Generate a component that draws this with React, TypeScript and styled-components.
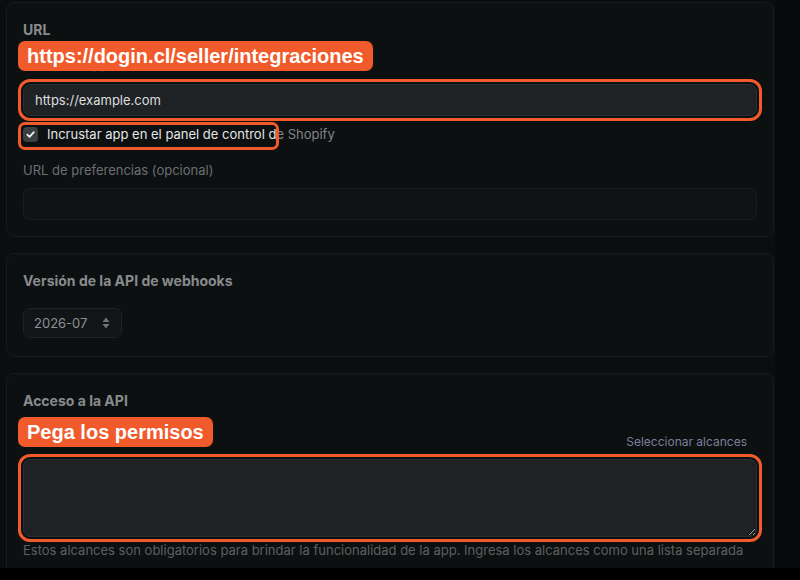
import React from "react";
import styled, { createGlobalStyle } from "styled-components";

const Global = createGlobalStyle`
  html, body { margin: 0; padding: 0; background: #000; }
  body { font-family: Inter, "Noto Sans", sans-serif; -webkit-font-smoothing: antialiased; }
  * { box-sizing: border-box; }
`;

const ORANGE = "#f15a2b";

const Viewport = styled.div`
  height: 568px;
  width: 800px;
  overflow: hidden;
  background: #090a0b;
`;

const Column = styled.div`
  width: 775px;
  height: 100%;
  background: #0b0d0e;
  padding: 2px 1px 0 6px;
  display: flex;
  flex-direction: column;
  gap: 16px;
`;

const Card = styled.section<{ $pb?: number }>`
  position: relative;
  flex-shrink: 0;
  background: #0d1011;
  border: 1px solid #171b1d;
  border-radius: 8px;
  padding: 17px 16px ${(p) => p.$pb ?? 16}px 16px;
  display: flex;
  flex-direction: column;
`;

const Title = styled.h2<{ $mb: number }>`
  margin: 0 0 ${(p) => p.$mb}px 0;
  font-size: 14px;
  line-height: 20px;
  font-weight: 700;
  color: #888b8d;
`;

const Label = styled.div<{ $mb: number }>`
  font-size: 13px;
  line-height: 20px;
  color: #6b6f71;
  margin-bottom: ${(p) => p.$mb}px;
`;

const Input = styled.div<{ $filled?: boolean; $ring?: boolean }>`
  height: 32px;
  border-radius: 7px;
  display: flex;
  align-items: center;
  padding: 0 11px;
  font-size: 13px;
  color: #dcdedf;
  background: ${(p) => (p.$filled ? "#1f2225" : "#101315")};
  border: 1px solid ${(p) => (p.$filled ? "#2b2f32" : "#1a1e20")};
  outline: ${(p) => (p.$ring ? `3px solid ${ORANGE}` : "none")};
  outline-offset: 2px;
`;

const CheckRow = styled.label`
  position: relative;
  display: flex;
  align-items: center;
  gap: 9px;
  height: 16px;
  margin: 10px 0 18px;
  font-size: 13px;
`;

const Box = styled.span`
  width: 15px;
  height: 15px;
  border-radius: 4px;
  background: #3b4043;
  display: flex;
  align-items: center;
  justify-content: center;
`;

const Bright = styled.span`
  color: #e4e5e6;
`;
const Dim = styled.span`
  color: #818487;
`;

const RingBox = styled.span`
  position: absolute;
  left: -5px;
  top: -4px;
  width: 261px;
  height: 28px;
  border: 3px solid ${ORANGE};
  border-radius: 7px;
  pointer-events: none;
`;

const Badge = styled.div<{ $top: number }>`
  position: absolute;
  left: 11px;
  top: ${(p) => p.$top}px;
  height: 30px;
  padding: 0 9px;
  display: flex;
  align-items: center;
  background: ${ORANGE};
  border-radius: 7px;
  color: #fff;
  font-family: "Liberation Sans", Arial, sans-serif;
  font-weight: 700;
  font-size: 20px;
  white-space: nowrap;
`;

const Select = styled.div`
  width: 99px;
  height: 30px;
  border-radius: 7px;
  background: #121517;
  border: 1px solid #1f2325;
  display: flex;
  align-items: center;
  justify-content: space-between;
  padding: 0 10px 0 10px;
  font-size: 13px;
  color: #8e9193;
`;

const RowBetween = styled.div`
  display: flex;
  justify-content: space-between;
  align-items: center;
  height: 20px;
  margin-bottom: 8px;
`;

const Link = styled.span`
  font-size: 12px;
  color: #7a7f9b;
  margin-right: 10px;
`;

const Area = styled.textarea`
  height: 78px;
  resize: vertical;
  border-radius: 7px;
  background: #1f2225;
  border: 1px solid #2b2f32;
  outline: 3px solid ${ORANGE};
  outline-offset: 2px;
  color-scheme: dark;
  font-family: inherit;
  margin-bottom: 3px;
`;

const Help = styled.div`
  font-size: 13px;
  line-height: 20px;
  color: #5c6062;
  white-space: nowrap;
`;

export default function App() {
  return (
    <>
      <Global />
      <Viewport>
        <Column>
          <Card>
            <Title $mb={14}>URL</Title>
            <Label $mb={10}>URL de la app</Label>
            <Input $filled $ring>https://example.com</Input>
            <CheckRow>
              <Box>
                <svg width="11" height="11" viewBox="0 0 12 12">
                  <path d="M2.5 6.2 L5 8.6 L9.6 3.4" fill="none" stroke="#f2f2f2" strokeWidth="1.9" strokeLinecap="round" strokeLinejoin="round" />
                </svg>
              </Box>
              <span>
                <Bright>Incrustar app en el panel de control d</Bright>
                <Dim>e Shopify</Dim>
              </span>
              <RingBox />
            </CheckRow>
            <Label $mb={8}>URL de preferencias (opcional)</Label>
            <Input />
            <Badge $top={38}>https://dogin.cl/seller/integraciones</Badge>
          </Card>

          <Card $pb={18}>
            <Title $mb={17}>Versión de la API de webhooks</Title>
            <Select>
              <span>2026-07</span>
              <svg width="10" height="14" viewBox="0 0 10 14">
                <path d="M5 1.5 L8.5 6 H1.5 Z" fill="#6f7375" />
                <path d="M5 12.5 L8.5 8 H1.5 Z" fill="#6f7375" />
              </svg>
            </Select>
          </Card>

          <Card>
            <Title $mb={20}>Acceso a la API</Title>
            <RowBetween>
              <Label $mb={0}>Alcances</Label>
              <Link>Seleccionar alcances</Link>
            </RowBetween>
            <Area />
            <Help>
              Estos alcances son obligatorios para brindar la funcionalidad de la app. Ingresa los alcances como una lista separada
            </Help>
            <Badge $top={43}>Pega los permisos</Badge>
          </Card>
        </Column>
      </Viewport>
    </>
  );
}
